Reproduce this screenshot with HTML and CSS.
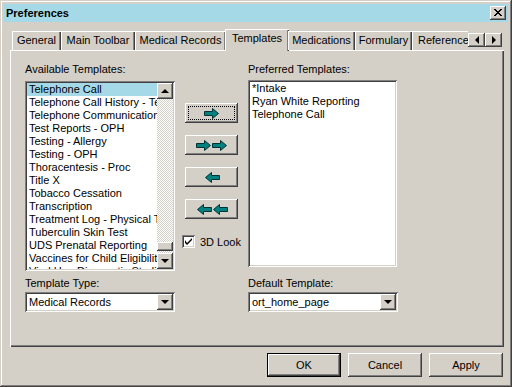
FILE: index.html
```html
<!DOCTYPE html>
<html>
<head>
<meta charset="utf-8">
<link rel="stylesheet" href="styles.css">
</head>
<body>
<div class="window">
  <div class="titlebar">
    <span class="title">Preferences</span>
    <span class="close raised"><svg width="8" height="7" viewBox="0 0 8 7"><path d="M0 0 L7 7 M1 0 L8 7 M7 0 L0 7 M8 0 L1 7" stroke="#000" stroke-width="1" shape-rendering="crispEdges"/></svg></span>
  </div>
  <div class="tabrow">
    <div class="tabs">
      <div class="tab t-general">General</div>
      <div class="tab t-main">Main Toolbar</div>
      <div class="tab t-med">Medical Records</div>
      <div class="tab sel t-templ">Templates</div>
      <div class="tab t-meds">Medications</div>
      <div class="tab t-form">Formulary</div>
      <div class="tab t-ref">Reference</div>
    </div>
    <div class="tabscroll">
      <span class="sbtn raised"><span class="tri-left"></span></span>
      <span class="sbtn raised"><span class="tri-right"></span></span>
    </div>
  </div>
  <div class="panel">
    <div class="col left">
      <div class="label">Available Templates:</div>
      <div class="listbox sunken avail">
        <div class="items">
          <div class="item hl">Telephone Call</div>
          <div class="item">Telephone Call History - Template</div>
          <div class="item">Telephone Communication</div>
          <div class="item">Test Reports - OPH</div>
          <div class="item">Testing - Allergy</div>
          <div class="item">Testing - OPH</div>
          <div class="item">Thoracentesis - Proc</div>
          <div class="item">Title X</div>
          <div class="item">Tobacco Cessation</div>
          <div class="item">Transcription</div>
          <div class="item">Treatment Log - Physical Therapy</div>
          <div class="item">Tuberculin Skin Test</div>
          <div class="item">UDS Prenatal Reporting</div>
          <div class="item">Vaccines for Child Eligibility</div>
          <div class="item">Viral Hep Diagnostic Studies</div>
        </div>
        <div class="vscroll">
          <span class="sbtn2 raised"><span class="tri-up"></span></span>
          <span class="track"><span class="thumb raised"></span></span>
          <span class="sbtn2 raised"><span class="tri-down"></span></span>
        </div>
      </div>
      <div class="label lbl2">Template Type:</div>
      <div class="combo sunken">
        <span class="ctext">Medical Records</span>
        <span class="cbtn raised"><span class="tri-down"></span></span>
      </div>
    </div>
    <div class="col mid">
      <div class="abtn raised focus"><span class="focusrect"></span>
        <svg width="16" height="11" viewBox="0 0 16 11"><path d="M0.5 3.5 H8.5 V0.5 L14.5 5.5 L8.5 10.5 V7.5 H0.5 Z" fill="#008080" stroke="#003333"/></svg>
      </div>
      <div class="abtn raised">
        <svg width="32" height="11" viewBox="0 0 32 11"><path d="M0.5 3.5 H8.5 V0.5 L14.5 5.5 L8.5 10.5 V7.5 H0.5 Z" fill="#008080" stroke="#003333"/><path d="M16.5 3.5 H24.5 V0.5 L30.5 5.5 L24.5 10.5 V7.5 H16.5 Z" fill="#008080" stroke="#003333"/></svg>
      </div>
      <div class="abtn raised">
        <svg width="16" height="11" viewBox="0 0 16 11"><path d="M15.5 3.5 H7.5 V0.5 L1.5 5.5 L7.5 10.5 V7.5 H15.5 Z" fill="#008080" stroke="#003333"/></svg>
      </div>
      <div class="abtn raised">
        <svg width="32" height="11" viewBox="0 0 32 11"><path d="M15.5 3.5 H7.5 V0.5 L1.5 5.5 L7.5 10.5 V7.5 H15.5 Z" fill="#008080" stroke="#003333"/><path d="M31.5 3.5 H23.5 V0.5 L17.5 5.5 L23.5 10.5 V7.5 H31.5 Z" fill="#008080" stroke="#003333"/></svg>
      </div>
      <div class="check">
        <span class="cbox sunken"><svg width="7" height="7" viewBox="0 0 7 7"><path d="M0 2 V5 L2 7 L7 2 V0 L2 5 Z" fill="#000"/></svg></span>
        <span>3D Look</span>
      </div>
    </div>
    <div class="col right">
      <div class="label">Preferred Templates:</div>
      <div class="listbox sunken pref">
        <div class="items">
          <div class="item">*Intake</div>
          <div class="item">Ryan White Reporting</div>
          <div class="item">Telephone Call</div>
        </div>
      </div>
      <div class="label lbl2r">Default Template:</div>
      <div class="combo sunken">
        <span class="ctext">ort_home_page</span>
        <span class="cbtn raised"><span class="tri-down"></span></span>
      </div>
    </div>
  </div>
  <div class="footer">
    <div class="btn default"><span class="btn-in raised">OK</span></div>
    <div class="btn raised">Cancel</div>
    <div class="btn raised">Apply</div>
  </div>
</div>
</body>
</html>
```
FILE: styles.css
```css
* { box-sizing: border-box; margin: 0; padding: 0; }
body {
  margin: 0;
  background: #d4d0c8;
  font: 11px "Liberation Sans", Arial, sans-serif;
  color: #000;
}
.raised {
  background: #d4d0c8;
  box-shadow: inset -1px -1px #404040, inset 1px 1px #fff, inset -2px -2px #808080, inset 2px 2px #d4d0c8;
}
.sunken {
  background: #fff;
  box-shadow: inset 1px 1px #808080, inset -1px -1px #fff, inset 2px 2px #404040, inset -2px -2px #d4d0c8;
}
.window {
  width: 512px;
  height: 387px;
  padding: 4px;
  display: flex;
  flex-direction: column;
  background: #d4d0c8;
  box-shadow: inset -1px -1px #404040, inset 1px 1px #d4d0c8, inset -2px -2px #808080, inset 2px 2px #fff;
}
.titlebar {
  height: 18px;
  background: #a6d9e8;
  display: flex;
  align-items: center;
  justify-content: space-between;
  padding: 0 2px 0 2px;
}
.title { font-weight: bold; font-size: 11px; }
.close {
  width: 16px;
  height: 14px;
  display: flex;
  align-items: center;
  justify-content: center;
  padding-bottom: 1px;
}
.close svg { display: block; }

.tabrow {
  margin-top: 7px;
  height: 22px;
  margin-bottom: -1px;
  display: flex;
  position: relative;
  z-index: 1;
}
.tabs {
  display: flex;
  align-items: flex-end;
  width: 464px;
  padding-left: 8px;
  overflow: hidden;
}
.tab {
  flex: none;
  height: 19px;
  margin-bottom: 1px;
  line-height: 18px;
  text-align: center;
  white-space: nowrap;
  box-shadow: inset 1px 1px #fff, inset -1px 0 #404040, inset -2px 0 #808080;
  background: #d4d0c8;
}
.tab.sel {
  height: 22px;
  margin: 0 -1px;
  line-height: 19px;
  box-shadow: inset 1px 1px #fff, inset -1px 0 #404040, inset -2px 0 #808080;
}
.t-general { width: 49px; }
.t-main { width: 74px; }
.t-med { width: 91px; }
.t-templ { width: 64px; }
.t-meds { width: 67px; }
.t-form { width: 57px; }
.t-ref { width: 64px; text-align: left; padding-left: 6px; }
.tabscroll {
  display: flex;
  margin-top: 4px;
  height: 14px;
}
.sbtn {
  width: 17px;
  height: 14px;
  display: flex;
  align-items: center;
  justify-content: center;
}
.tri-left, .tri-right, .tri-up, .tri-down { width: 0; height: 0; border-style: solid; }
.tri-left { border-width: 4px 4px 4px 0; border-color: transparent #000 transparent transparent; }
.tri-right { border-width: 4px 0 4px 4px; border-color: transparent transparent transparent #000; }
.tri-up { border-width: 0 4px 4px 4px; border-color: transparent transparent #000 transparent; }
.tri-down { border-width: 4px 4px 0 4px; border-color: #000 transparent transparent transparent; }

.panel {
  margin-left: 6px;
  width: 494px;
  height: 297px;
  padding: 13px 0 0 15px;
  display: flex;
  box-shadow: inset 1px 1px #fff, inset -1px -1px #404040, inset -2px -2px #808080;
}
.col { display: flex; flex-direction: column; }
.left { width: 150px; }
.mid { width: 73px; padding-top: 40px; }
.right { width: 150px; }
.label { height: 13px; line-height: 13px; white-space: nowrap; }
.listbox {
  display: flex;
  padding: 2px;
  overflow: hidden;
}
.avail { margin-top: 5px; height: 190px; }
.pref { margin-top: 4px; height: 187px; width: 149px; }
.items { flex: 1; overflow: hidden; }
.item {
  height: 13px;
  line-height: 13px;
  padding-left: 2px;
  white-space: nowrap;
  overflow: hidden;
}
.item.hl { background: #a6d9e8; }
.vscroll {
  width: 16px;
  display: flex;
  flex-direction: column;
}
.sbtn2 {
  width: 16px;
  height: 16px;
  flex: none;
  display: flex;
  align-items: center;
  justify-content: center;
}
.track {
  flex: 1;
  display: flex;
  flex-direction: column;
  justify-content: flex-end;
  background: repeating-conic-gradient(#fff 0 25%, #d4d0c8 0 50%) 0 0 / 2px 2px;
}
.thumb { height: 9px; margin-bottom: 2px; }
.lbl2 { margin-top: 6px; }
.lbl2r { margin-top: 10px; }
.combo {
  margin-top: 2px;
  height: 20px;
  padding: 2px;
  display: flex;
  align-items: center;
}
.ctext { flex: 1; padding-left: 2px; white-space: nowrap; }
.cbtn {
  width: 16px;
  height: 16px;
  display: flex;
  align-items: center;
  justify-content: center;
}
.abtn {
  width: 53px;
  height: 20px;
  margin-left: 10px;
  margin-bottom: 12px;
  display: flex;
  align-items: center;
  justify-content: center;
  position: relative;
}
.abtn svg { display: block; }
.focusrect {
  position: absolute;
  inset: 3px;
  border: 1px dotted #000;
}
.check {
  margin-top: 4px;
  margin-left: 7px;
  display: flex;
  align-items: center;
  gap: 5px;
  white-space: nowrap;
}
.cbox {
  width: 13px;
  height: 13px;
  display: flex;
  align-items: center;
  justify-content: center;
}
.cbox svg { display: block; }

.footer {
  margin-top: 6px;
  display: flex;
  justify-content: flex-end;
  gap: 7px;
  padding-right: 5px;
}
.btn {
  width: 74px;
  height: 24px;
  display: flex;
  align-items: center;
  justify-content: center;
}
.btn.default {
  border: 1px solid #000;
  padding: 0;
}
.btn-in {
  width: 100%;
  height: 100%;
  display: flex;
  align-items: center;
  justify-content: center;
}
```
